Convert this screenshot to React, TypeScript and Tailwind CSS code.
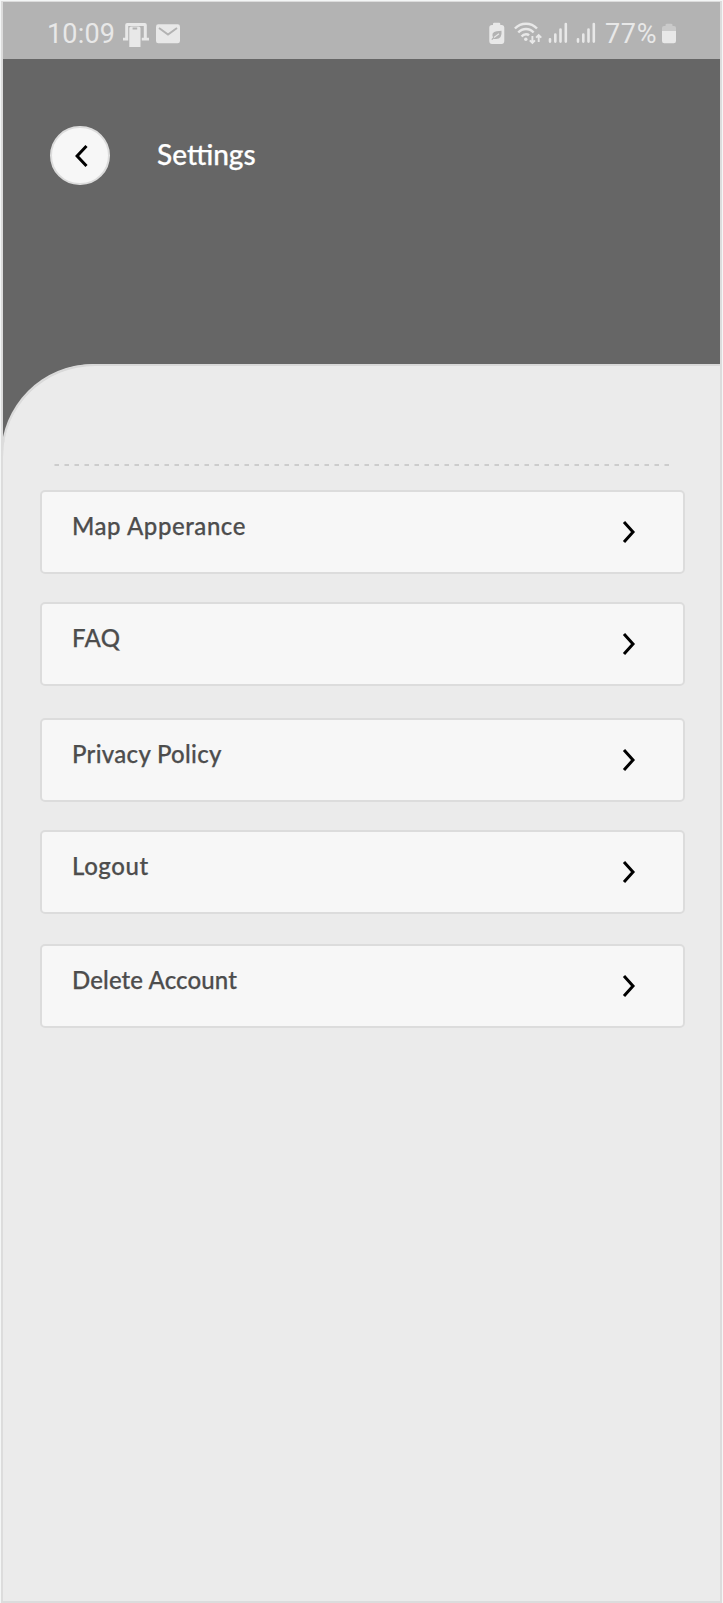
import React from "react";

type Row = { label: string; gap: string; tracking: string };

const rows: Row[] = [
  { label: "Map Apperance", gap: "mt-[24px]", tracking: "tracking-[0.55px]" },
  { label: "FAQ", gap: "mt-[28px]", tracking: "tracking-[0.3px]" },
  { label: "Privacy Policy", gap: "mt-[32px]", tracking: "tracking-[0.3px]" },
  { label: "Logout", gap: "mt-[28px]", tracking: "tracking-[0.6px]" },
  { label: "Delete Account", gap: "mt-[30px]", tracking: "tracking-[0.12px]" },
];

function Chevron({ back = false }: { back?: boolean }) {
  return (
    <svg width="14" height="24" viewBox="0 0 14 24" fill="none" stroke="#000" strokeWidth="3">
      <path d={back ? "M12.5 2 3.1 12 12.5 22" : "M2 2 11 12 2 22"} />
    </svg>
  );
}

function Signal() {
  return (
    <svg width="20" height="22" viewBox="0 0 20 22" stroke="#e8e8e8" strokeWidth="2.6" strokeLinecap="round">
      <path d="M2 17.3v2.3M7.3 12.5v7.1M12.5 7.5v12.1M17.8 2v17.6" />
    </svg>
  );
}

function StatusBar() {
  return (
    <div className="flex h-[57px] shrink-0 items-start bg-[#b3b3b3] pl-[44px] pt-[15px] font-[Roboto,sans-serif] text-[27px] leading-[34px] text-[#e8e8e8]">
      <span className="w-[76px] tracking-[0.2px]">10:09</span>
      <svg className="mt-[5px]" width="26" height="26" viewBox="0 0 26 26" fill="#e8e8e8">
        <path d="M2.2 3Q2.2 1 4.2 1H21.8Q23.8 1 23.8 3V15.7H26V18.6H18.8V15.7H20.8V4H5.2V15.7V18.6H0V15.7H2.2Z" />
        <path fillRule="evenodd" d="M6.3 6.2Q6.3 4.5 8 4.5H15.8Q17.5 4.5 17.5 6.2V25H6.3ZM9.6 5.6V7.4H14.2V5.6Z" />
      </svg>
      <svg className="ml-[7px] mt-[6px]" width="24" height="22" viewBox="0 0 24 22">
        <rect y="1.3" width="24" height="19" rx="2.4" fill="#e8e8e8" />
        <path d="M3 5 12 11.5 21 5" fill="none" stroke="#b3b3b3" strokeWidth="2" />
      </svg>
      <svg className="ml-[309px] mt-[5px]" width="16" height="23" viewBox="0 0 16 23">
        <path d="M4 2Q4 .8 5.2 .8H10Q11.3 .8 11.3 2V3H13Q15.3 3 15.3 5.5V19Q15.3 22 12.5 22H3Q.3 22 .3 19V5.5Q.3 3 3 3H4Z" fill="#e8e8e8" />
        <path d="M2.3 17.2 4 15.6Q1.8 10 7.5 9.2L12.5 8.7Q13.5 18 5.5 17L4.6 16.8 3.2 18Z" fill="#b3b3b3" />
        <path d="m5 15.5 5-3.8" stroke="#e8e8e8" strokeWidth="1.1" />
      </svg>
      <svg className="ml-[9px] mt-[5px]" width="28" height="24" viewBox="0 0 28 24" fill="none" stroke="#e8e8e8" strokeWidth="2.4">
        <path d="M.9 6.5Q5.5 1.7 12 1.7T23 6.5M4.3 10.5Q7.4 7 12 7T19.6 10.5M7.6 14.4Q9.3 12.3 12 12.3 14 12.3 15 13.4" />
        <circle cx="11.8" cy="17.2" r="1.7" fill="#e8e8e8" stroke="none" />
        <path d="M18.4 14V21M15.8 18.3 18.4 20.9 21 18.3M24.7 20V13M22.1 15.7 24.7 13.1 27.3 15.7" strokeWidth="1.9" />
      </svg>
      <div className="ml-[6px] mt-[5px] flex gap-[8px]">
        <Signal />
        <Signal />
      </div>
      <span className="ml-[9px] w-[54px] tracking-[0.7px]">77%</span>
      <svg className="ml-[3px] mt-[6px]" width="14" height="21" viewBox="0 0 14 21">
        <path d="M0 8V5Q0 3 2 3H3.5V2Q3.5 .7 5 .7H9Q10.5 .7 10.5 2V3H12Q14 3 14 5V8Z" fill="#cacaca" />
        <path d="M0 8H14V18Q14 20.3 11.7 20.3H2.3Q0 20.3 0 18Z" fill="#e8e8e8" />
      </svg>
    </div>
  );
}

export default function App() {
  return (
    <div className="h-[1603px] w-[723px] overflow-hidden bg-[#f4f6f6] pl-px pr-px pt-px font-[Lato,sans-serif]">
      <div className="flex h-[1602px] flex-col border-[2px] border-t-[1px] border-[#dcdcdc] bg-[#666666]">
        <StatusBar />
        <header className="flex h-[305px] shrink-0 items-start pl-[47px] pt-[67px]">
          <button className="flex h-[59px] w-[60px] items-center justify-center rounded-full border-[2px] border-[#dcdcdc] bg-[#f7f7f7] pl-px pt-px">
            <Chevron back />
          </button>
          <h1 className="ml-[47px] mt-[11px] text-[28px] font-medium leading-[34px] text-white [-webkit-text-stroke:0.25px_#fff]">Settings</h1>
        </header>
        <main className="flex flex-1 flex-col rounded-tl-[92px] border-t-[2px] border-[#d9d9d9] bg-[#ebebeb] pl-[37px] pr-[35px] pt-[98px] shadow-[-2px_0_0_#dcdcdc]">
          <svg className="ml-[14px] shrink-0" width="616" height="2" viewBox="0 0 616 2">
            <path d="M.5 1H615" stroke="#cccccc" strokeWidth="2" strokeDasharray="4.5 5.5" />
          </svg>
          {rows.map((row) => (
            <div
              key={row.label}
              className={`${row.gap} flex h-[84px] w-[645px] shrink-0 items-start justify-between rounded-[5px] border-[2px] border-[#dcdcdc] bg-[#f7f7f7] pl-[30px] pr-[47px]`}
            >
              <span className={`${row.tracking} mt-[19px] whitespace-nowrap text-[24px] font-medium leading-[30px] text-[#4d4d4d] [-webkit-text-stroke:0.25px_#4d4d4d]`}>{row.label}</span>
              <span className="mt-[28px]">
                <Chevron />
              </span>
            </div>
          ))}
        </main>
      </div>
    </div>
  );
}
